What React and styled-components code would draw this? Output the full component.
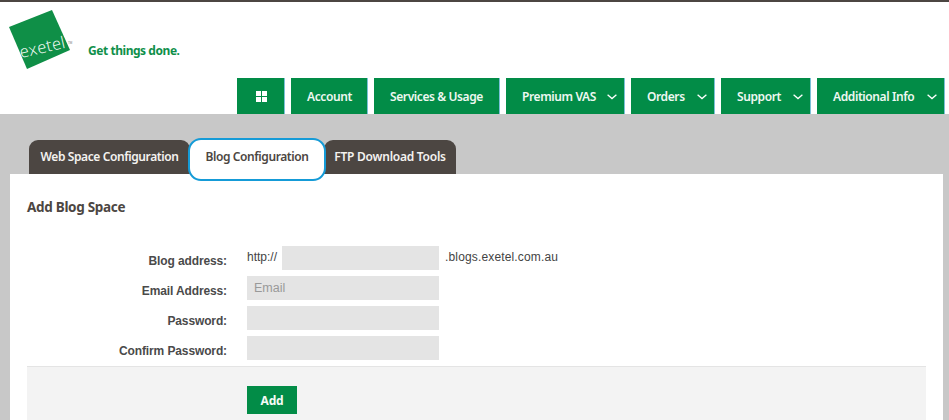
import React from 'react';
import styled, { createGlobalStyle } from 'styled-components';

const Global = createGlobalStyle`
  html, body { margin: 0; padding: 0; background: #c8c8c8; }
  body { font-family: "Liberation Sans", Arial, sans-serif; }
`;

const Page = styled.div`
  width: 949px;
  height: 420px;
  overflow: hidden;
  background: #c8c8c8;
`;

const Header = styled.header`
  height: 112px;
  background: #fff;
  border-top: 2px solid #4c4642;
  display: flex;
  flex-direction: column;
  justify-content: space-between;
`;

const Brand = styled.div`
  display: flex;
  align-items: flex-start;
  padding: 8px 0 0 9px;
`;

const Tagline = styled.span`
  margin: 33px 0 0 7px;
  font: 700 12px/16px "Noto Sans", sans-serif;
  letter-spacing: -0.45px;
  color: #0f8f4a;
`;

const Nav = styled.nav`
  display: flex;
  gap: 6px;
  padding-left: 237px;
`;

const NavItem = styled.a`
  box-sizing: border-box;
  width: ${p => p.$w}px;
  height: 36px;
  display: flex;
  align-items: center;
  justify-content: ${p => (p.$icon ? 'center' : 'flex-start')};
  padding: ${p => (p.$icon ? '0 0 0 2px' : '2px 0 0 16px')};
  background: #028c47;
  border-right: 1px solid #7cc0d8;
  color: #eef8f1;
  font: 600 12px/16px "Noto Sans", sans-serif;
  letter-spacing: -0.4px;
  white-space: nowrap;
`;

const Chevron = styled.svg`
  width: 10px;
  height: 6px;
  margin-left: auto;
  margin-right: 7px;
  flex: none;
`;

const Tabs = styled.div`
  display: flex;
  height: 34px;
  margin-top: 26px;
  padding-left: 29px;
`;

const Tab = styled.div`
  position: relative;
  box-sizing: border-box;
  width: ${p => p.$w}px;
  display: flex;
  align-items: center;
  justify-content: center;
  border-radius: 9px 9px 0 0;
  background: ${p => (p.$active ? '#fff' : '#4c4642')};
  color: ${p => (p.$active ? '#4c4642' : '#f4f2f0')};
  font: 600 12px/16px "Noto Sans", sans-serif;
  letter-spacing: ${p => p.$track || -0.4}px;
  white-space: nowrap;
`;

const Highlight = styled.span`
  position: absolute;
  left: -2px;
  right: -2px;
  top: -2px;
  bottom: -7px;
  border: 2.5px solid #159bd7;
  border-radius: 13px;
  z-index: 1;
`;

const Panel = styled.main`
  margin: 0 6px 0 10px;
  height: 246px;
  background: #fff;
  padding: 0 17px;
  display: flex;
  flex-direction: column;
`;

const Heading = styled.h2`
  margin: 25px 0 0;
  font: 700 13.5px/16px "Noto Sans", sans-serif;
  letter-spacing: -0.3px;
  color: #4c4642;
`;

const Form = styled.form`
  margin-top: 31px;
  display: grid;
  grid-template-columns: 200px 1fr;
  column-gap: 20px;
  row-gap: 6px;
`;

const Label = styled.label`
  align-self: center;
  padding-top: 5px;
  text-align: right;
  font-size: 12px;
  font-weight: 700;
  letter-spacing: -0.12px;
  color: #4a4a4a;
`;

const Field = styled.div`
  display: flex;
  align-items: center;
`;

const Static = styled.span`
  font-size: 12px;
  letter-spacing: ${p => p.$wide ? 0.15 : 0}px;
  color: #444;
  margin-top: -2px;
`;

const Input = styled.input`
  box-sizing: border-box;
  width: ${p => p.$w}px;
  height: 24px;
  margin: ${p => (p.$slim ? '0 6px 0 5px' : '0')};
  padding: 0 7px;
  border: 0;
  background: #e4e4e4;
  font: 12.5px "Liberation Sans", sans-serif;
  &::placeholder { color: #999; opacity: 1; }
`;

const Actions = styled.div`
  margin-top: 6px;
  flex: 1;
  background: #f3f3f3;
  border-top: 1px solid #e4e4e4;
  padding: 19px 0 0 220px;
`;

const AddButton = styled.button`
  width: 50px;
  height: 28px;
  padding: 2px 0 0;
  border: 0;
  background: #028c47;
  color: #f4fbf6;
  font: 700 12px/16px "Noto Sans", sans-serif;
  letter-spacing: -0.2px;
`;

const Logo = () => (
  <svg width="72" height="60" viewBox="9 10 72 60" style={{ display: 'block' }}>
    <polygon points="9,27 52,10 70,50 27,69" fill="#0f8f47" />
    <text x="21" y="58" transform="rotate(-13 21 58)" fill="#fff" fontFamily="'Open Sans', sans-serif" fontSize="16.5" letterSpacing="0.3" fontWeight="300">exetel</text>
    <text x="68" y="44" fill="#777" fontFamily="'Liberation Sans', sans-serif" fontSize="3">TM</text>
  </svg>
);

const GridIcon = () => (
  <svg width="11" height="11" viewBox="0 0 11 11" fill="#fff">
    <rect width="5" height="5" />
    <rect x="6" width="5" height="5" />
    <rect y="6" width="5" height="5" />
    <rect x="6" y="6" width="5" height="5" />
  </svg>
);

const Down = () => (
  <Chevron viewBox="0 0 10 6" fill="none" stroke="#fff" strokeWidth="1.3">
    <path d="M.6.8 5 4.6 9.4.8" />
  </Chevron>
);

const navItems = [
  { label: 'Account', w: 77 },
  { label: 'Services & Usage', w: 126 },
  { label: 'Premium VAS', w: 119, more: true },
  { label: 'Orders', w: 84, more: true },
  { label: 'Support', w: 90, more: true },
  { label: 'Additional Info', w: 128, more: true },
];

export default function App() {
  return (
    <Page>
      <Global />
      <Header>
        <Brand>
          <Logo />
          <Tagline>Get things done.</Tagline>
        </Brand>
        <Nav>
          <NavItem $w={48} $icon><GridIcon /></NavItem>
          {navItems.map(item => (
            <NavItem key={item.label} $w={item.w}>
              {item.label}
              {item.more && <Down />}
            </NavItem>
          ))}
        </Nav>
      </Header>
      <Tabs>
        <Tab $w={161}>Web Space Configuration</Tab>
        <Tab $w={134} $active>
          Blog Configuration
          <Highlight />
        </Tab>
        <Tab $w={132} $track={-0.25}>FTP Download Tools</Tab>
      </Tabs>
      <Panel>
        <Heading>Add Blog Space</Heading>
        <Form>
          <Label>Blog address:</Label>
          <Field>
            <Static>http://</Static>
            <Input $w={157} $slim />
            <Static $wide>.blogs.exetel.com.au</Static>
          </Field>
          <Label>Email Address:</Label>
          <Field><Input $w={192} placeholder="Email" /></Field>
          <Label>Password:</Label>
          <Field><Input $w={192} /></Field>
          <Label>Confirm Password:</Label>
          <Field><Input $w={192} /></Field>
        </Form>
        <Actions>
          <AddButton type="button">Add</AddButton>
        </Actions>
      </Panel>
    </Page>
  );
}
